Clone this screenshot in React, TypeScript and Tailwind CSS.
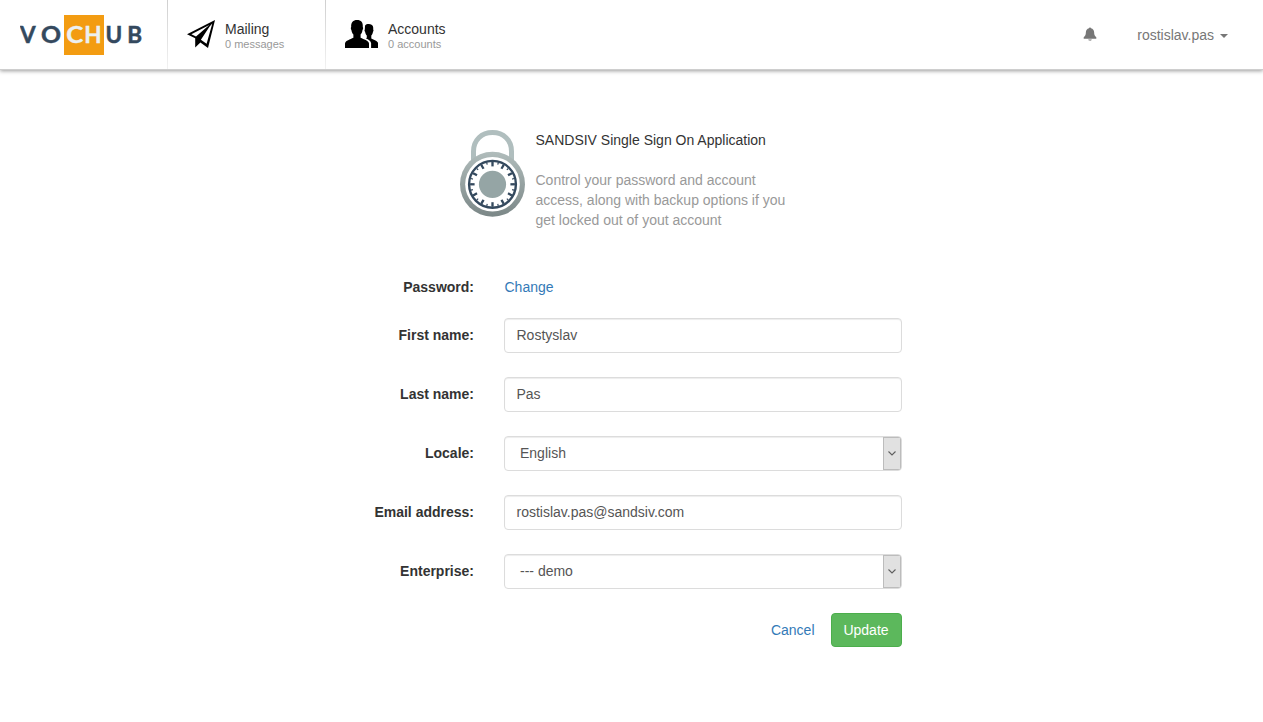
import type { ReactNode } from "react";

function Logo() {
  return (
    <svg className="h-10 w-[124px]" viewBox="0 0 124 40" fontFamily="Lato, sans-serif" fontWeight="700" fontSize="22.5">
      <rect x="44" y="0" width="40" height="40" fill="#f39c12" />
      <g fill="#34495e" stroke="#34495e" strokeWidth="0.5">
        <text x="0" y="28.2">V</text>
        <text x="21" y="28.2" textLength="20" lengthAdjust="spacingAndGlyphs">O</text>
        <text x="85.5" y="28.2">U</text>
        <text x="107.2" y="28.2">B</text>
      </g>
      <g fill="#ecf0f1" stroke="#ecf0f1" strokeWidth="0.4">
        <text x="46.3" y="28.2" textLength="17" lengthAdjust="spacingAndGlyphs">C</text>
        <text x="64.3" y="28.2">H</text>
      </g>
    </svg>
  );
}

function PlaneIcon() {
  return (
    <svg className="h-7 w-7 shrink-0" viewBox="0 0 28 28">
      <path fillRule="evenodd" d="M28 0L0 14.2L8.2 18.2V27.4L13.4 22.5L21 28ZM4.4 14.2L22.3 4.9L9 16.4ZM25.3 3.4L19.6 23.7L13.9 19.7L22.6 6.6Z" />
    </svg>
  );
}

function UsersIcon() {
  return (
    <svg className="h-7 w-[33px] shrink-0" viewBox="0 0 33 28">
      <path d="M0 28V23.4C.4 20.6 5.2 19.5 8.4 17.8V14.6C7 13.3 6.7 11.5 6.4 10C5.7 9.3 5.7 7.7 6.2 7.1C5.8 2.4 8.2 0 12 0C16.2 0 18.2 2.6 17.8 7.1C18.4 7.8 18.2 9.4 17.5 10C17.3 11.6 16.8 13.4 15.6 14.6V17.8C18.8 19.4 23.5 20.6 24 23.4V28Z" />
      <path d="M20 5.7C21.2 4.1 22.5 3.9 24 4C27.2 4.1 28.7 6.1 28.2 9.6C28.7 10.2 28.5 11.4 28 11.8C27.8 13.3 27.3 14.6 26.3 15.5V18.5C28.8 19.8 32.7 21 33 23V28H26.1V23C25.5 20.3 22.6 18.9 20.8 18.2L21.8 17.7V15.4C20.8 14.6 20.3 13.2 20.1 11.8C19.4 11.1 19.4 9.9 19.8 9.5Z" />
    </svg>
  );
}

function Padlock() {
  const ticks = Array.from({ length: 12 }, (_, i) => i * 30);
  const minor = Array.from({ length: 24 }, (_, i) => i * 15);
  return (
    <svg className="h-[87px] w-[65px] shrink-0" viewBox="0 0 65 87">
      <defs>
        <linearGradient id="metal" x1="0" y1="0" x2="0" y2="1">
          <stop offset="0" stopColor="#b0bcbb" />
          <stop offset="1" stopColor="#7b8787" />
        </linearGradient>
      </defs>
      <path d="M13.5 36V21.5C13.5 10 21.5 2.6 32.5 2.6S51.5 10 51.5 21.5V36" fill="none" stroke="#b0bebe" strokeWidth="5" />
      <circle cx="32.5" cy="54.3" r="32.5" fill="url(#metal)" />
      <circle cx="32.5" cy="54.3" r="27.3" fill="#fff" />
      <circle cx="32.5" cy="54.3" r="23.4" fill="none" stroke="#34495e" strokeWidth="2.4" />
      <g stroke="#34495e">
        {minor.map((a) => (
          <path key={a} d="M32.5 32V34" strokeWidth="1.2" transform={`rotate(${a} 32.5 54.3)`} />
        ))}
        {ticks.map((a) => (
          <path key={a} d="M32.5 32V36.4" strokeWidth="2.3" transform={`rotate(${a} 32.5 54.3)`} />
        ))}
      </g>
      <circle cx="32.5" cy="54.3" r="13.6" fill="#95a5a5" />
    </svg>
  );
}

function Bell() {
  return (
    <svg className="mb-0.5 h-[14px] w-[14px]" viewBox="0 0 14 14" fill="#777">
      <path d="M6 1.2C6 .2 8 .2 8 1.2C10 1.8 11 3.2 11.1 5C11.2 8 11.7 9 13.3 10.2V11.8H.7V10.2C2.3 9 2.8 8 2.9 5C3 3.2 4 1.8 6 1.2ZM5.2 12.6H8.8C8.3 14.2 5.7 14.2 5.2 12.6Z" />
    </svg>
  );
}

function NavItem({ icon, title, detail }: { icon: ReactNode; title: string; detail: string }) {
  return (
    <div className="flex h-[69px] w-[158px]">
      <div className="w-px bg-linear-to-b from-[#cfcfcf] to-[#f2f2f2]" />
      <div className="flex items-start pt-5 pl-[19px]">
        {icon}
        <div className="pl-[10px]">
          <div className="text-sm leading-[18px] text-[#333]">{title}</div>
          <div className="text-[11px] leading-3 text-[#999]">{detail}</div>
        </div>
      </div>
    </div>
  );
}

function Row({ label, children }: { label: string; children: ReactNode }) {
  return (
    <div className="mb-[25px] flex h-[34px] items-center">
      <div className="w-[474px] text-right font-bold text-[#333]">{label}</div>
      <div className="ml-[29.5px] w-[398px]">{children}</div>
    </div>
  );
}

const field =
  "flex h-[35px] w-full items-center rounded-[4px] border border-[#dcdcdc] bg-white text-[#555] shadow-[inset_0_1px_1px_rgba(0,0,0,0.075)]";

function Input({ value }: { value: string }) {
  return <div className={`${field} pl-3`}>{value}</div>;
}

function Select({ value }: { value: string }) {
  return (
    <div className={`${field} justify-between overflow-hidden pl-[15.5px]`}>
      <span>{value}</span>
      <span className="flex h-full w-[18px] items-center justify-center border border-[#bcbcbc] bg-[#e1e1e1]">
        <svg className="h-[5px] w-2" viewBox="0 0 8 5" fill="none" stroke="#606060" strokeWidth="1.1">
          <path d="M.5 .5L4 4L7.5 .5" />
        </svg>
      </span>
    </div>
  );
}

export default function App() {
  return (
    <div className="min-h-[722px] w-[1263px] bg-white font-['Liberation_Sans',Arial,sans-serif] text-sm leading-5">
      <header className="flex h-[70px] items-start border-b border-[#cecece] shadow-[0_1px_4px_rgba(0,0,0,0.4)]">
        <div className="w-[167px] pt-[15px] pl-5">
          <Logo />
        </div>
        <NavItem icon={<PlaneIcon />} title="Mailing" detail="0 messages" />
        <NavItem icon={<UsersIcon />} title="Accounts" detail="0 accounts" />
        <div className="ml-auto flex h-[69px] items-center pr-[35px] text-[#777]">
          <Bell />
          <span className="ml-10">rostislav.pas</span>
          <svg className="mt-0.5 ml-[6px] h-1 w-2" viewBox="0 0 8 4" fill="#777">
            <path d="M0 0H8L4 4Z" />
          </svg>
        </div>
      </header>
      <main>
        <section className="flex pt-[60px] pl-[460px]">
          <Padlock />
          <div className="w-[275px] pl-[10.5px]">
            <h1 className="text-[#333]">SANDSIV Single Sign On Application</h1>
            <p className="mt-5 w-[260px] text-[#999]">
              Control your password and account access, along with backup options if you get locked out of yout account
            </p>
          </div>
        </section>
        <form className="pt-[47px]">
          <div className="mb-[21px] flex">
            <div className="w-[474px] text-right font-bold text-[#333]">Password:</div>
            <a className="ml-[30.5px] text-[#337ab7]">Change</a>
          </div>
          <Row label="First name:"><Input value="Rostyslav" /></Row>
          <Row label="Last name:"><Input value="Pas" /></Row>
          <Row label="Locale:"><Select value="English" /></Row>
          <Row label="Email address:"><Input value="rostislav.pas@sandsiv.com" /></Row>
          <Row label="Enterprise:"><Select value="--- demo" /></Row>
          <div className="flex w-[901.5px] items-center justify-end">
            <a className="mr-4 text-[#337ab7]">Cancel</a>
            <button type="button" className="h-[34px] w-[71px] rounded-[4px] border border-[#4cae4c] bg-[#5cb85c] text-white">
              Update
            </button>
          </div>
        </form>
      </main>
    </div>
  );
}
